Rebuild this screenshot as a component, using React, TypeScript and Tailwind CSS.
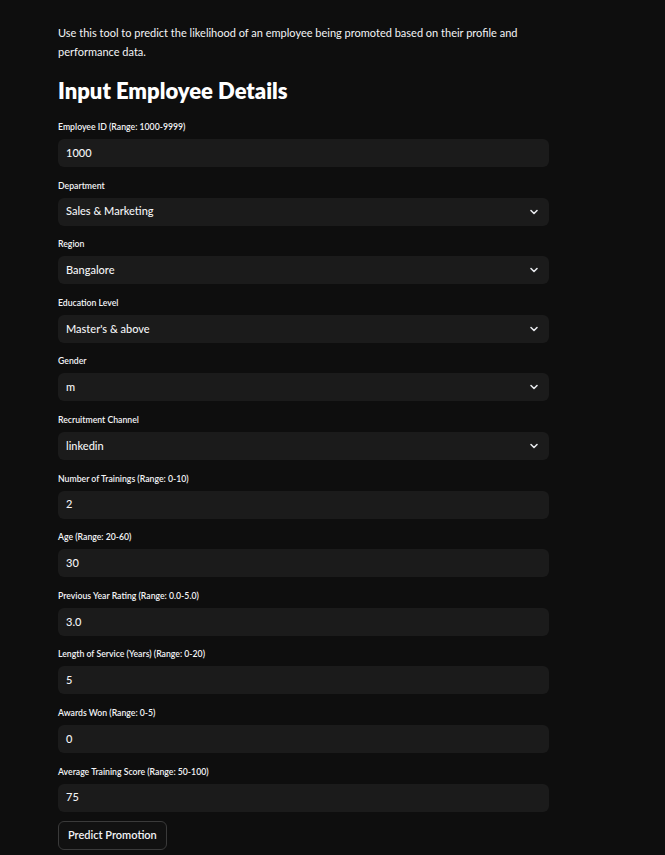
import { ReactNode } from 'react'

const FONT = { fontFamily: "Lato, 'Noto Sans', sans-serif" }

type Field = { label: string; value: string; select?: boolean }

const FIELDS: Field[] = [
  { label: 'Employee ID (Range: 1000-9999)', value: '1000' },
  { label: 'Department', value: 'Sales & Marketing', select: true },
  { label: 'Region', value: 'Bangalore', select: true },
  { label: 'Education Level', value: "Master's & above", select: true },
  { label: 'Gender', value: 'm', select: true },
  { label: 'Recruitment Channel', value: 'linkedin', select: true },
  { label: 'Number of Trainings (Range: 0-10)', value: '2' },
  { label: 'Age (Range: 20-60)', value: '30' },
  { label: 'Previous Year Rating (Range: 0.0-5.0)', value: '3.0' },
  { label: 'Length of Service (Years) (Range: 0-20)', value: '5' },
  { label: 'Awards Won (Range: 0-5)', value: '0' },
  { label: 'Average Training Score (Range: 50-100)', value: '75' },
]

function Chevron() {
  return (
    <svg width="10" height="10" viewBox="0 0 10 10" className="text-gray-200">
      <polyline points="2,3.5 5,6.5 8,3.5" fill="none" stroke="currentColor" strokeWidth="1.6" strokeLinecap="round" strokeLinejoin="round" />
    </svg>
  )
}

function Row({ label, children }: { label: string; children: ReactNode }) {
  return (
    <div className="flex flex-col">
      <label className="text-[8.7px] leading-[12px] font-semibold text-gray-100 mb-[6px]">{label}</label>
      {children}
    </div>
  )
}

export default function App() {
  return (
    <div className="min-h-[855px] w-full bg-[#0e0e0e] text-white" style={FONT}>
      <div className="w-[491px] ml-[58px] pt-[23px] pb-6">
        <p className="text-[11px] leading-[19px] text-gray-100">
          Use this tool to predict the likelihood of an employee being promoted based on their profile and performance data.
        </p>
        <h2 className="text-[22px] leading-[28px] font-extrabold mt-[16px] mb-[16px]">Input Employee Details</h2>

        <div className="flex flex-col gap-[12.6px]">
          {FIELDS.map((f) => (
            <Row key={f.label} label={f.label}>
              <div className="h-[28px] rounded-md bg-[#1b1b1b] flex items-center justify-between pl-[8px] pr-[10px] text-[11px] font-medium text-gray-100">
                <span>{f.value}</span>
                {f.select && <Chevron />}
              </div>
            </Row>
          ))}
        </div>

        <button className="mt-[9.5px] h-[29px] px-[9px] rounded-md border border-[#3a3a3a] bg-[#111111] text-[11px] font-semibold text-gray-100">
          Predict Promotion
        </button>
      </div>
    </div>
  )
}
